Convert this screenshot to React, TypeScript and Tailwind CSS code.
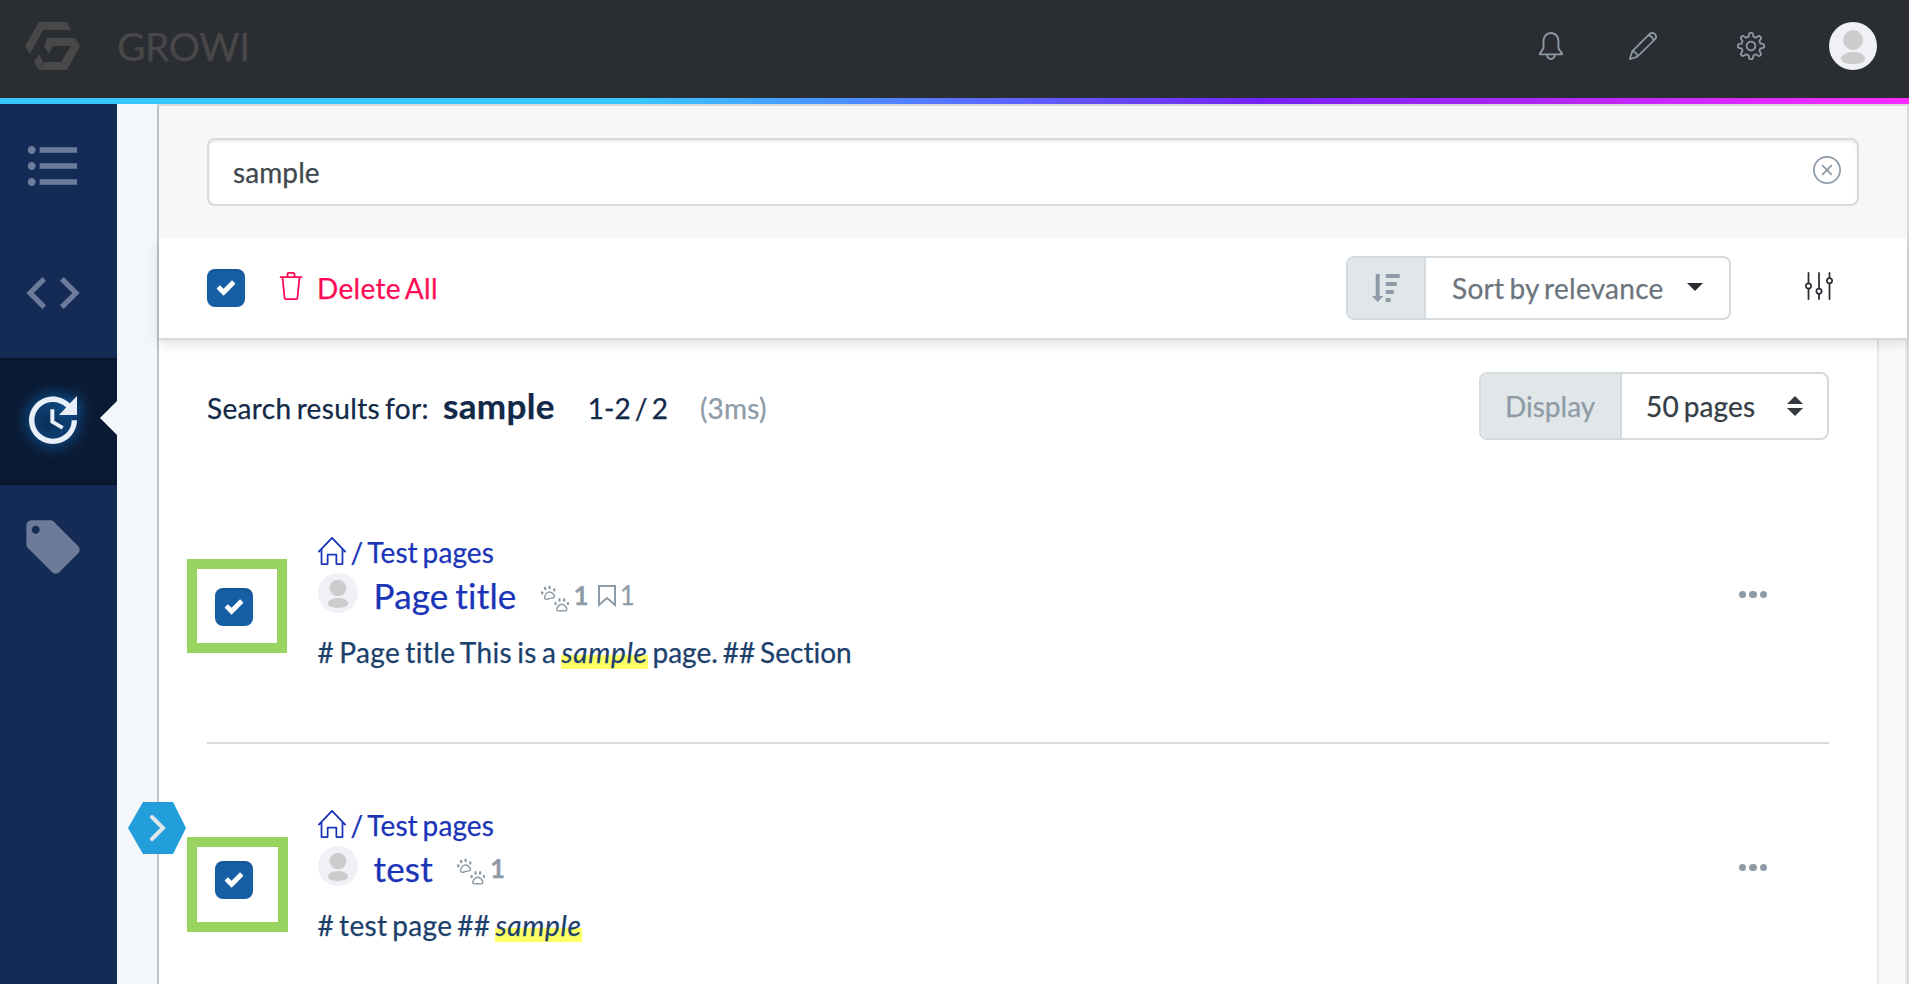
import type { ReactNode } from "react";
import { SlBell, SlPencil, SlSettings, SlClose, SlEqualizer, SlHome, SlTrash } from "react-icons/sl";
import { MdFormatListBulleted, MdCode, MdUpdate, MdLocalOffer } from "react-icons/md";

function Check() {
  return (
    <span className="flex size-[38px] shrink-0 items-center justify-center rounded-[8px] bg-[#175fa5] shadow-[inset_0_2px_2px_rgba(0,0,0,0.1)]">
      <svg viewBox="0 0 8 8" className="size-[19px] -translate-x-[0.5px] -translate-y-[0.5px]" fill="#fff">
        <path d="M6.564.75l-3.59 3.612-1.538-1.55L0 4.26l2.974 2.99L8 2.193z" />
      </svg>
    </span>
  );
}

function Avatar({ className }: { className: string }) {
  return (
    <svg viewBox="0 0 48 48" className={className}>
      <circle cx="24" cy="24" r="24" fill="#f0f1f6" />
      <circle cx="24" cy="18" r="10" fill="#ccc" />
      <path d="M12 37c0-4 5-7 12-7s12 3 12 7c0 3-5 5-12 5s-12-2-12-5z" fill="#ccc" />
    </svg>
  );
}

function Logo() {
  return (
    <svg viewBox="0 0 56 48" className="h-[48px] w-[56px]" fill="#484848">
      <path d="M14 0h28l4 8H18L5 32 0 24z" />
      <path d="M22 16h28l5 8-13 24H14l5-8h17l10-16H28l-4 8-5-8z" />
      <path d="M14 32l4 8-4 8-5-8z" />
    </svg>
  );
}

function SortIcon() {
  return (
    <svg viewBox="0 0 28 28" className="size-[28px]" fill="currentColor">
      <path d="M3.700 0h4v22H11.400L5.700 28 0 22h3.700z" />
      <path d="M13.700 0h14v4h-14zM13.700 8h11v4h-11zM13.700 16h8v4h-8zM13.700 24h5v4h-5z" />
    </svg>
  );
}

function Paw({ transform }: { transform: string }) {
  return (
    <g transform={transform}>
      <path d="M7.500 6.800c-2.600 0-5 3-5 5 0 2.200 3 1.400 5 1.400s5 .8 5-1.400c0-2-2.400-5-5-5z" fill="none" stroke="currentColor" strokeWidth="1.400" />
      <ellipse cx="1.300" cy="6" rx="1.200" ry="1.700" />
      <ellipse cx="5.200" cy="2.400" rx="1.200" ry="1.900" />
      <ellipse cx="9.800" cy="2.400" rx="1.200" ry="1.900" />
      <ellipse cx="13.700" cy="6" rx="1.200" ry="1.700" />
    </g>
  );
}

function Footprints() {
  return (
    <svg viewBox="0 0 28 28" className="size-[28px] translate-y-[3px]" fill="currentColor">
      <Paw transform="translate(0 1.500) rotate(-14 7 7)" />
      <Paw transform="translate(13.300 13.500)" />
    </svg>
  );
}

function Result({ title, children, bookmarks, box }: { title: string; children: ReactNode; bookmarks?: boolean; box: string }) {
  return (
    <article className="relative flex h-[270px] pt-[60px]">
      <div className="w-[110.500px] pl-2 pt-[56px]"><Check /></div>
      <div className={box} />
      <div className="flex-1">
        <div className="flex h-[40px] items-center text-[28px] leading-[40px] text-[#1a34b8]">
          <SlHome className="size-[28px] -translate-y-[1px]" />
          <span className="ml-[5px] tracking-[0.1px]">/ Test pages</span>
        </div>
        <div className="flex h-[46px] items-center">
          <Avatar className="size-[40px] -translate-y-[2px]" />
          <span className="ml-4 text-[35px] leading-[46px] tracking-[0.2px] text-[#1a34b8]">{title}</span>
          <div className="ml-6 flex items-center text-[26px] text-[#8e9ba7]">
            <Footprints />
            <b className="ml-[5px]">1</b>
            {bookmarks && (
              <>
                <svg viewBox="0 0 18 22" className="ml-[9px] h-[22px] w-[18px] translate-y-[1px]" fill="none" stroke="currentColor" strokeWidth="2">
                  <path d="M1 1h16v19L9 13l-8 7z" />
                </svg>
                <span className="ml-[4px]">1</span>
              </>
            )}
          </div>
        </div>
        <p className="mt-[13px] text-[28px] leading-[42px] tracking-[0.15px] text-[#1c3f6c]">{children}</p>
      </div>
      <div className="mr-[62px] mt-[59px] flex h-[8px] gap-[3px]">
        <i className="size-[7.4px] rounded-full bg-[#8e9ba7]" />
        <i className="size-[7.4px] rounded-full bg-[#8e9ba7]" />
        <i className="size-[7.4px] rounded-full bg-[#8e9ba7]" />
      </div>
    </article>
  );
}

function Mark() {
  return <em className="bg-[linear-gradient(transparent_60%,#ffff66_60%)] tracking-[0.7px]">sample</em>;
}

export default function App() {
  return (
    <div className="flex h-[984px] w-[1909px] flex-col overflow-hidden bg-[#f3f7fc] font-['Lato',sans-serif] [-webkit-text-stroke:0.25px] [font-variant-ligatures:none] [word-spacing:-2.4px]">
      <header className="flex h-[98px] shrink-0 items-center bg-[#2a2d32] pb-[6px] pl-[25px] pr-[32px] text-[#8e9ba7]">
        <Logo />
        <span className="ml-[36px] text-[39px] tracking-[-0.4px] text-[#484848]">GROWI</span>
        <SlBell className="ml-auto size-[28px]" />
        <SlPencil className="ml-[64px] size-[28px]" />
        <SlSettings className="ml-[80px] size-[28px]" />
        <Avatar className="ml-[64px] size-[48px]" />
      </header>
      <div className="h-[6px] shrink-0 bg-[linear-gradient(90deg,#37c8ff_0%,#37c8ff_33%,#7423ff_66%,#ff2bff_100%)]" />
      <div className="flex min-h-0 flex-1">
        <nav className="w-[117px] shrink-0 bg-[#142c55] text-[#6c7b99]">
          <div className="h-[127px] pl-[21px] pt-[30px]"><MdFormatListBulleted className="size-[64px]" /></div>
          <div className="h-[127px] pl-[21px] pt-[30px]"><MdCode className="size-[64px]" /></div>
          <div className="relative h-[127px] border-y-2 border-[#08152b] bg-[#0b1a33] pl-[21px] pt-[28px] text-[#e9eff9]">
            <MdUpdate className="size-[64px] drop-shadow-[0_0_8px_#0f8af0]" />
            <span className="absolute right-0 top-[41px] h-[34px] w-[17px] bg-[#f3f7fc] [clip-path:polygon(100%_0,100%_100%,0_50%)]" />
          </div>
          <div className="h-[127px] pl-[21px] pt-[30px]"><MdLocalOffer className="size-[64px]" /></div>
        </nav>
        <main className="relative ml-[40px] flex flex-1 flex-col border-x-2 border-t-2 border-l-[#bcc2c8] border-r-[#d5dadf] border-t-[#d5dadf] bg-white">
          <div className="z-20 h-[132px] shrink-0 bg-[#f7f7f7] px-[48px] pt-[32px]">
            <div className="flex h-[68px] items-center rounded-[8px] border-2 border-[#d5dadf] bg-white px-[24px] pr-[16px] text-[28px] text-[#40484f] shadow-[inset_0_2px_3px_rgba(0,0,0,0.08)]">
              <span className="flex-1 tracking-[0.1px]">sample</span>
              <SlClose className="size-[28px] -translate-y-[2px] text-[#8e9ba7]" />
            </div>
          </div>
          <div className="z-10 flex h-[102px] shrink-0 items-center border-b-2 border-[#d5dadf] bg-white pl-[48px] pr-[74px] text-[28px] shadow-[0_4px_12px_rgba(0,0,0,0.12)]">
            <Check />
            <SlTrash className="ml-[32px] size-[28px] -translate-y-[2px] text-[#ff0a54]" />
            <span className="ml-[12px] tracking-[0.3px] text-[#ff0a54]">Delete All</span>
            <div className="ml-auto flex h-[64px] w-[385px] items-center overflow-hidden rounded-[8px] border-2 border-[#d5dadf]">
              <div className="flex h-full w-[78px] items-center justify-center border-r-2 border-[#d5dadf] bg-[#e1e6e9] text-[#8e9ba7]"><SortIcon /></div>
              <span className="ml-[26px] tracking-[0.28px] text-[#6c757d]">Sort by relevance</span>
              <i className="ml-[23px] -translate-y-[1px] border-x-[8px] border-t-[8px] border-x-transparent border-t-[#2a2d32]" />
            </div>
            <SlEqualizer className="ml-[74px] size-[28px] -translate-y-[2px] text-[#2a2d32]" />
          </div>
          <div className="flex min-h-0 flex-1">
            <section className="flex-1 px-[48px] pt-[32px]">
              <div className="flex h-[68px] text-[28px] text-[#122948]">
                <div className="flex -translate-y-[1px] items-baseline">
                  <span className="tracking-[0.35px]">Search results for:</span>
                  <b className="ml-[14px] text-[35px] leading-[68px] tracking-[0.35px]">sample</b>
                  <span className="ml-[33px] [word-spacing:-3px]">1-2 / 2</span>
                  <span className="ml-[32px] tracking-[0.2px] text-[#8e9ba7]">(3ms)</span>
                </div>
                <div className="ml-auto flex h-[68px] w-[350px] items-center overflow-hidden rounded-[8px] border-2 border-[#d5dadf]">
                  <span className="flex h-full w-[141px] items-center border-r-2 border-[#d5dadf] bg-[#e1e6e9] pl-[24px] text-[#8e9ba7]">Display</span>
                  <span className="ml-[24px] tracking-[0.15px] text-[#343d45]">50 pages</span>
                  <svg viewBox="0 0 16 20" className="ml-auto mr-[24px] h-[20px] w-[16px]" fill="#343a40"><path d="M0 8l8-8 8 8zM0 12l8 8 8-8z" /></svg>
                </div>
              </div>
              <div className="mt-[32px]">
                <div className="mb-px border-b-2 border-[#d5dadf]">
                  <Result title="Page title" bookmarks box="absolute left-[-20px] top-[87px] h-[94px] w-[100px] border-[10px] border-[#98d45f]"><span className="tracking-[0.38px]"># Page title This is a </span><Mark /><span className="tracking-[0.03px]"> page. ## Section</span></Result>
                </div>
                <Result title="test" box="absolute left-[-20px] top-[92px] h-[95px] w-[101px] border-[10px] border-[#98d45f]"><span className="tracking-[0.3px]"># test page ## </span><Mark /></Result>
              </div>
            </section>
            <div className="w-[30px] border-x-2 border-[#e7e7e7] bg-[#fafafa]" />
          </div>
          <svg viewBox="0 0 58 52" className="absolute left-[-31px] top-[696px] z-20 h-[52px] w-[58px]">
            <path d="M15 0h30l13 26-13 26H15L0 26z" fill="#229fda" />
            <path d="M24 15l11 11-11 11" fill="none" stroke="#e1e6e9" strokeWidth="4" strokeLinecap="round" />
          </svg>
        </main>
      </div>
    </div>
  );
}
